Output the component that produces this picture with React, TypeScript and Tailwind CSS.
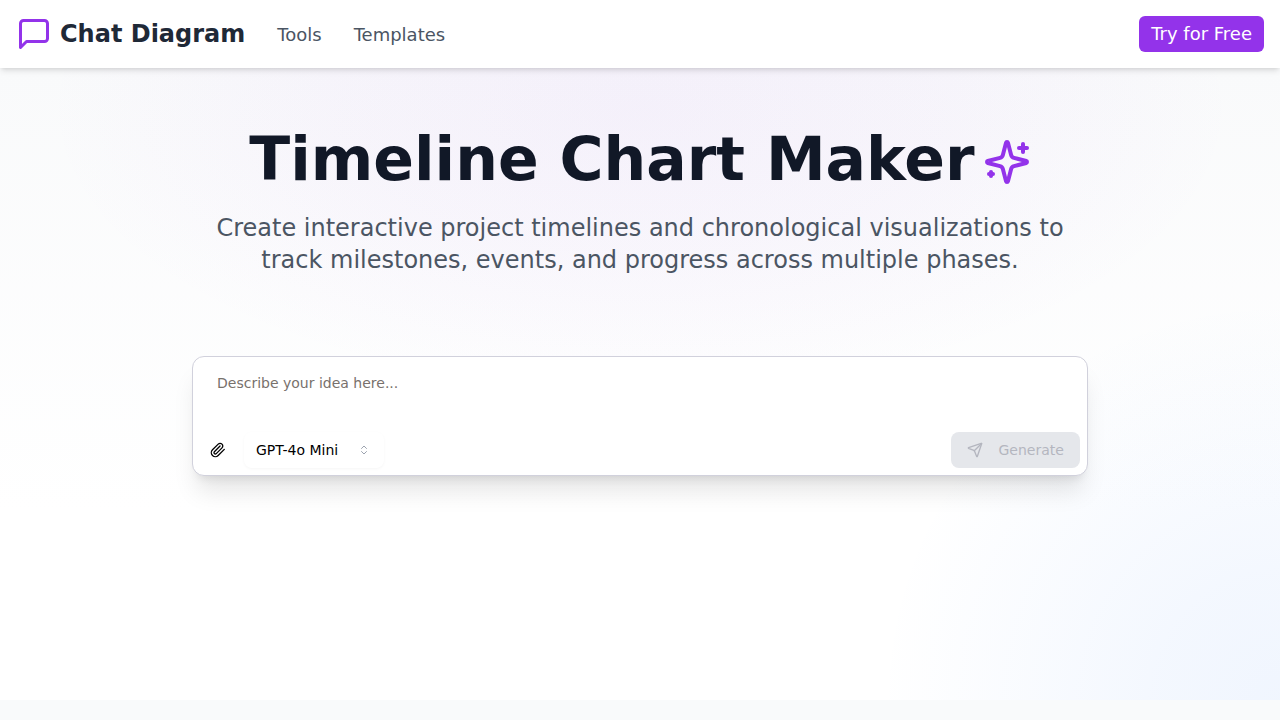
export default function App() {
  return <Page />;
}

function Icon({ size, className, strokeWidth = 2, children }: { size: number; className?: string; strokeWidth?: number; children: React.ReactNode }) {
  return (
    <svg width={size} height={size} viewBox="0 0 24 24" fill="none" stroke="currentColor" strokeWidth={strokeWidth} strokeLinecap="round" strokeLinejoin="round" className={className}>
      {children}
    </svg>
  );
}

function Page() {
  return (
    <div className="min-h-screen bg-[#f9fafb] font-['DejaVu_Sans',sans-serif] flex flex-col">
      <header className="relative z-10 h-[68px] bg-white shadow-md flex items-center justify-between pl-4 pr-4">
        <div className="flex items-center">
          <Icon size={36} className="text-[#9333ea]">
            <path d="M21 15a2 2 0 0 1-2 2H7l-4 4V5a2 2 0 0 1 2-2h14a2 2 0 0 1 2 2z" />
          </Icon>
          <span className="ml-2 text-2xl font-bold text-[#1f2937]">Chat Diagram</span>
          <nav className="ml-8 flex items-center gap-8 text-lg text-[#4b5563] translate-y-[0.5px]">
            <span>Tools</span>
            <span>Templates</span>
          </nav>
        </div>
        <button className="h-9 px-3 rounded-md bg-[#9333ea] text-white text-lg">Try for Free</button>
      </header>
      <main className="h-[632px] flex flex-col items-center bg-white bg-[radial-gradient(ellipse_600px_290px_at_50%_40px,rgba(147,51,234,0.05)_0%,rgba(147,51,234,0.03)_50%,transparent_100%),radial-gradient(circle_400px_at_100%_100%,rgba(59,130,246,0.075)_0%,rgba(59,130,246,0.06)_30%,transparent_100%),linear-gradient(180deg,#f9fafb_0%,#ffffff_70%)]">
        <div className="mt-[52px] flex items-start h-[76px]">
          <h1 className="text-6xl font-bold text-[#111827] leading-[76px] translate-y-[0.5px]">Timeline Chart Maker</h1>
          <Icon size={48} className="ml-2 mt-[18px] text-[#9333ea]">
            <path d="M9.937 15.5A2 2 0 0 0 8.5 14.063l-6.135-1.582a.5.5 0 0 1 0-.962L8.5 9.936A2 2 0 0 0 9.937 8.5l1.582-6.135a.5.5 0 0 1 .963 0L14.063 8.5A2 2 0 0 0 15.5 9.937l6.135 1.581a.5.5 0 0 1 0 .964L15.5 14.063a2 2 0 0 0-1.437 1.437l-1.582 6.135a.5.5 0 0 1-.963 0z" />
            <path d="M20 3v4" />
            <path d="M22 5h-4" />
            <path d="M4 17v2" />
            <path d="M5 18H3" />
          </Icon>
        </div>
        <p className="mt-[16px] w-[896px] text-center text-2xl leading-8 text-[#4b5563]">
          Create interactive project timelines and chronological visualizations to track milestones, events, and progress across multiple phases.
        </p>
        <div className="mt-[80px] w-[896px] h-[120px] rounded-xl border border-[#d1d1dc] bg-white shadow-xl flex flex-col">
          <div className="pl-6 pt-[17px] text-sm leading-[18px] text-[#78716c]">Describe your idea here...</div>
          <div className="mt-auto mb-[7px] flex items-center justify-between pl-[17px] pr-[7px]">
            <div className="flex items-center">
              <Icon size={16} className="text-black">
                <path d="m21.44 11.05-9.19 9.19a6 6 0 0 1-8.49-8.49l8.57-8.57A4 4 0 1 1 18 8.84l-8.59 8.57a2 2 0 0 1-2.83-2.83l8.49-8.48" />
              </Icon>
              <div className="ml-[18px] w-[140px] h-9 rounded-lg bg-white shadow-[0_1px_3px_rgba(0,0,0,0.04)] flex items-center justify-between pl-3 pr-[14px] text-sm text-black">
                <span>GPT-4o Mini</span>
                <Icon size={12} className="text-[#9ca3af]">
                  <path d="m7 15 5 5 5-5" />
                  <path d="m7 9 5-5 5 5" />
                </Icon>
              </div>
            </div>
            <button className="w-[129px] h-9 rounded-lg bg-[#e5e7eb] flex items-center pl-4 text-sm text-[#b4b6bf]">
              <Icon size={16}>
                <path d="M14.536 21.686a.5.5 0 0 0 .937-.024l6.5-19a.496.496 0 0 0-.635-.635l-19 6.5a.5.5 0 0 0-.024.937l7.93 3.18a2 2 0 0 1 1.112 1.11z" />
                <path d="m21.854 2.147-10.94 10.939" />
              </Icon>
              <span className="ml-[15.5px]">Generate</span>
            </button>
          </div>
        </div>
      </main>
    </div>
  );
}
